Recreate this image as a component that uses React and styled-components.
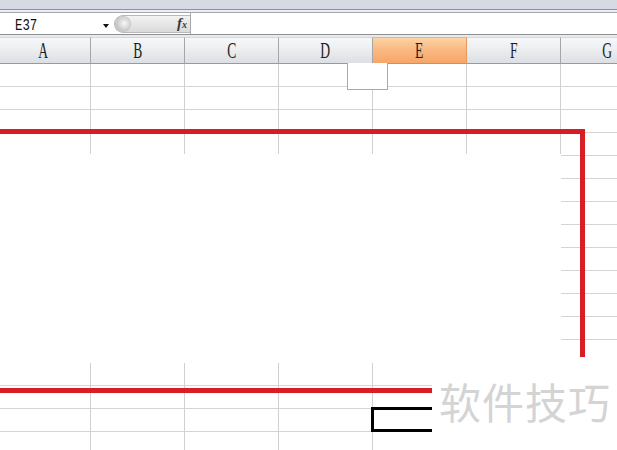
import React from 'react'
import styled, { createGlobalStyle } from 'styled-components'

const Global = createGlobalStyle`
  html, body { margin: 0; padding: 0; background: #fff; }
  body { font-family: "Liberation Sans", Arial, sans-serif; }
`

const cols = ['A', 'B', 'C', 'D', 'E', 'F', 'G']
const rowCount = 17

export default function App() {
  return (
    <Page>
      <Global />
      <TopBand />
      <Strip />
      <FormulaBar>
        <NameBox>
          <NameText>E37</NameText>
          <DropArrow />
        </NameBox>
        <Pill>
          <Knob />
          <Fx>f<small>x</small></Fx>
        </Pill>
        <FormulaInput />
      </FormulaBar>
      <Gap />
      <Sheet>
        <HeaderRow>
          {cols.map((c) => (
            <ColHead key={c} active={c === 'E'}>
              <Letter>{c}</Letter>
            </ColHead>
          ))}
        </HeaderRow>
        {Array.from({ length: rowCount }).map((_, r) => (
          <Row key={r}>
            {cols.map((c) => (
              <Cell key={c} />
            ))}
          </Row>
        ))}
      </Sheet>

      {/* pasted picture and markup lying over the sheet */}
      <SmallBox />
      <Blank />
      <CornerBlank>
        <Watermark>软件技巧</Watermark>
      </CornerBlank>
      <TopRed />
      <SideRed />
      <BottomRed />
      <BlackBox />
    </Page>
  )
}

const Page = styled.div`
  position: relative;
  width: 617px;
  height: 450px;
  overflow: hidden;
  background: #fff;
`

const TopBand = styled.div`
  height: 9px;
  background: #d5dae3;
  border-bottom: 1px solid #8d939c;
`

const Strip = styled.div`
  height: 2px;
  background: #eceef2;
  border-bottom: 1px solid #a3a7ae;
`

const FormulaBar = styled.div`
  display: flex;
  height: 21px;
  background: #fff;
  border-bottom: 1px solid #8f8f8f;
`

const NameBox = styled.div`
  position: relative;
  width: 114px;
  display: flex;
  align-items: center;
  padding-left: 15px;
  box-sizing: border-box;
`

const NameText = styled.span`
  font-family: "Liberation Mono", "DejaVu Sans Mono", monospace;
  font-size: 13px;
  color: #111;
  display: inline-block;
  transform: scale(0.95, 1.2);
  transform-origin: left center;
  margin-top: 4px;
`

const DropArrow = styled.span`
  position: absolute;
  right: 5px;
  top: 11px;
  width: 0;
  height: 0;
  border-left: 3.5px solid transparent;
  border-right: 3.5px solid transparent;
  border-top: 4px solid #111;
`

const Pill = styled.div`
  position: relative;
  width: 76px;
  height: 18px;
  margin-top: 2px;
  border-radius: 10px 0 0 10px;
  background: linear-gradient(#f2f2f2, #dadada);
  border: 1px solid #b8b8b8;
  border-right: none;
  box-sizing: border-box;
`

const Knob = styled.span`
  position: absolute;
  left: 1px;
  top: 1px;
  width: 14px;
  height: 14px;
  border-radius: 50%;
  background: radial-gradient(circle at 60% 45%, #f8f8f8 0%, #d0d0d0 55%, #a8a8a8 100%);
  box-shadow: 0 0 0 1px #c4c4c4;
`

const Fx = styled.span`
  position: absolute;
  right: 3px;
  top: -1px;
  font-family: "Liberation Serif", serif;
  font-style: italic;
  font-weight: bold;
  font-size: 15px;
  color: #3a3a3a;
  small { font-size: 10px; }
`

const FormulaInput = styled.div`
  flex: 1;
  border-left: 1px solid #a8a8a8;
  background: #fff;
`

const Gap = styled.div`
  height: 2px;
  background: #e8eaee;
`

const Sheet = styled.div`
  margin-left: -3px;
`

const HeaderRow = styled.div`
  display: flex;
  height: 27px;
`

const ColHead = styled.div`
  flex: 0 0 94px;
  box-sizing: border-box;
  display: flex;
  align-items: center;
  justify-content: center;
  border-right: 1px solid ${(p) => (p.active ? '#e59a5c' : '#a6a6a6')};
  border-bottom: 1px solid ${(p) => (p.active ? '#e08a45' : '#9a9a9a')};
  border-top: 1px solid ${(p) => (p.active ? '#f1b37e' : '#d4d7dc')};
  background: ${(p) =>
    p.active
      ? 'linear-gradient(#fcd3a3 0%, #f9b983 45%, #f7a668 100%)'
      : 'linear-gradient(#f6f7f8 0%, #eceef0 45%, #dcdfe3 100%)'};
`

const Letter = styled.span`
  display: inline-block;
  font-family: "Liberation Serif", "Times New Roman", serif;
  font-size: 17px;
  color: #1e1e1e;
  transform: scale(0.8, 1.35);
  margin-top: 1px;
`

const Row = styled.div`
  display: flex;
  height: 23px;
`

const Cell = styled.div`
  flex: 0 0 94px;
  box-sizing: border-box;
  border-right: 1px solid #d0d0d0;
  border-bottom: 1px solid #d4d4d4;
`

const SmallBox = styled.div`
  position: absolute;
  left: 347px;
  top: 63px;
  width: 41px;
  height: 27px;
  box-sizing: border-box;
  border: 1px solid #a9a9a9;
  border-top: none;
  background: #fff;
`

const Blank = styled.div`
  position: absolute;
  left: 0;
  top: 154px;
  width: 561px;
  height: 209px;
  background: #fff;
`

const CornerBlank = styled.div`
  position: absolute;
  left: 432px;
  top: 362px;
  right: 0;
  bottom: 0;
  padding: 18px 0 0 7px;
  background: #fff;
`

const Watermark = styled.div`
  font-family: "Noto Sans CJK SC", "Noto Sans", sans-serif;
  font-size: 42px;
  line-height: 1;
  letter-spacing: 1px;
  color: #d4d4d4;
  white-space: nowrap;
`

const RedLine = styled.div`
  position: absolute;
  background: #d71d26;
`

const TopRed = styled(RedLine)`
  left: 0;
  top: 129px;
  width: 585px;
  height: 5px;
`

const SideRed = styled(RedLine)`
  left: 580px;
  top: 129px;
  width: 5px;
  height: 228px;
`

const BottomRed = styled(RedLine)`
  left: 0;
  top: 388px;
  width: 432px;
  height: 5px;
`

const BlackBox = styled.div`
  position: absolute;
  left: 371px;
  top: 407px;
  width: 61px;
  height: 25px;
  box-sizing: border-box;
  border: 3px solid #000;
  border-right: none;
`
